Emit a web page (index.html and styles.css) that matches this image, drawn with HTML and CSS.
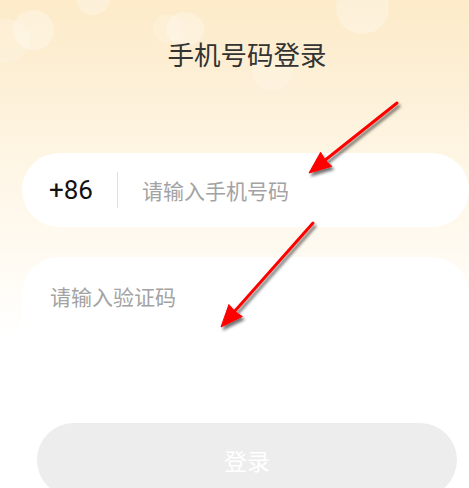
FILE: index.html
```html
<!DOCTYPE html>
<html lang="zh">
<head>
<meta charset="utf-8">
<title>手机号码登录</title>
<link rel="stylesheet" href="styles.css">
</head>
<body>
<div class="page">
  <div class="bokeh b1"></div>
  <div class="bokeh b2"></div>
  <div class="bokeh b3"></div>
  <div class="bokeh b4"></div>
  <div class="bokeh b5"></div>
  <div class="bokeh b6"></div>
  <div class="bokeh b7"></div>

  <h1 class="title">手机号码登录</h1>

  <div class="field phone">
    <span class="code">+86</span>
    <span class="divider"></span>
    <span class="placeholder">请输入手机号码</span>
  </div>

  <div class="field sms">
    <span class="placeholder">请输入验证码</span>
  </div>

  <div class="login-btn">登录</div>

  <svg class="arrows" width="469" height="488" viewBox="0 0 469 488">
    <defs>
      <filter id="sh" x="-20%" y="-20%" width="140%" height="140%">
        <feDropShadow dx="2" dy="3" stdDeviation="1.6" flood-color="#000" flood-opacity="0.55"/>
      </filter>
    </defs>
    <g filter="url(#sh)" fill="#ff0000" stroke="#ff0000">
      <line x1="397" y1="103" x2="324" y2="161" stroke-width="3" stroke-linecap="round"/>
      <polygon points="309,173 320.6,152.3 325.5,160.5 331.8,166.3" stroke-width="1" stroke-linejoin="round"/>
      <line x1="313" y1="223" x2="234" y2="312" stroke-width="3" stroke-linecap="round"/>
      <polygon points="221,327 228.9,304.5 234.8,311.5 242.3,316.5" stroke-width="1" stroke-linejoin="round"/>
    </g>
  </svg>
</div>
</body>
</html>
```

FILE: styles.css
```css
html, body {
  margin: 0;
  padding: 0;
}

body {
  width: 469px;
  height: 488px;
  overflow: hidden;
  background: #ffffff;
  font-family: "Noto Sans CJK SC", "Noto Sans", sans-serif;
}

.page {
  position: relative;
  width: 469px;
  height: 488px;
  overflow: hidden;
  padding-top: 36px;
  box-sizing: border-box;
  background: linear-gradient(180deg, #fdebc9 0px, #fdf0d8 90px, #fef6e6 170px, #fffaf1 250px, #fffdf9 300px, #ffffff 340px);
}

.bokeh {
  position: absolute;
  border-radius: 50%;
  background: rgba(255, 255, 255, 0.28);
}
.b1 { left: 13px; top: 10px; width: 41px; height: 40px; }
.b2 { left: -25px; top: 18px; width: 55px; height: 45px; background: rgba(255,255,255,0.16); }
.b3 { left: 76px; top: -19px; width: 34px; height: 34px; }
.b4 { left: 166px; top: 12px; width: 38px; height: 34px; }
.b5 { left: 153px; top: 14px; width: 30px; height: 30px; background: rgba(255,255,255,0.16); }
.b6 { left: 336px; top: -18px; width: 53px; height: 52px; }
.b7 { left: 252px; top: 54px; width: 41px; height: 36px; background: rgba(255,255,255,0.18); }

.title {
  position: relative;
  margin: 0;
  padding-left: 25px;
  text-align: center;
  font-size: 26.5px;
  line-height: 36px;
  font-weight: 400;
  color: #333333;
}

.field {
  position: relative;
  margin-left: 22px;
  width: 447px;
  background: #ffffff;
  border-radius: 37px;
  box-sizing: border-box;
}

.phone {
  margin-top: 81px;
  height: 74px;
  display: flex;
  align-items: center;
  padding-left: 27px;
}

.code {
  font-family: Roboto, "Noto Sans", sans-serif;
  font-size: 26px;
  color: #111111;
  line-height: 30px;
}

.divider {
  width: 1px;
  height: 36px;
  background: #e0e0e0;
  margin: 0 24px 0 24px;
}

.placeholder {
  font-size: 21px;
  line-height: 28px;
  color: #a3a3a3;
}

.sms {
  margin-top: 30px;
  height: 140px;
  padding: 25px 28px 0 28px;
  display: flex;
  align-items: flex-start;
}

.login-btn {
  position: relative;
  margin: 26px 0 0 37px;
  width: 420px;
  height: 74px;
  border-radius: 37px;
  background: #ededed;
  color: #ffffff;
  font-size: 23px;
  display: flex;
  align-items: center;
  justify-content: center;
}

.arrows {
  position: absolute;
  left: 0;
  top: 0;
  pointer-events: none;
}
```
